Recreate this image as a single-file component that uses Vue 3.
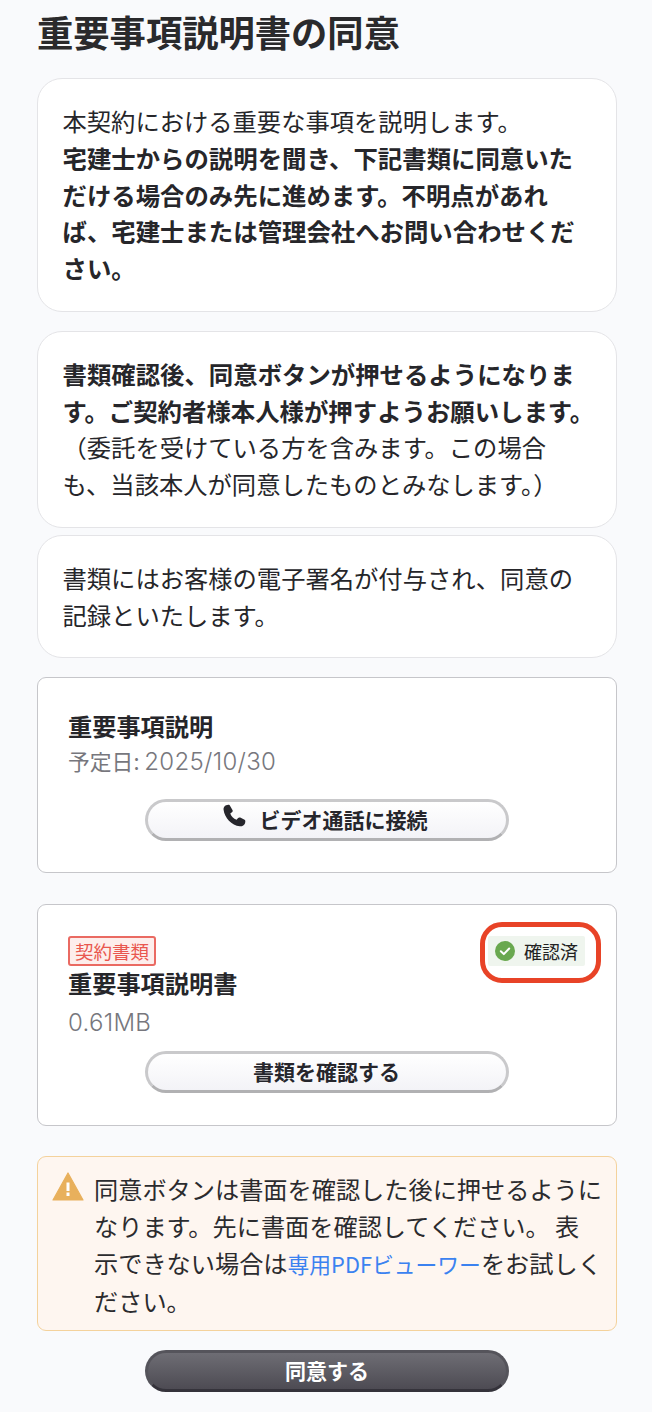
<script setup>
const warnText = "同意ボタンは書面を確認した後に押せるように"
</script>

<template>
  <div class="page">
    <h1 class="title">重要事項説明書の同意</h1>

    <div class="note first">
      本契約における重要な事項を説明します。<br />
      <b>宅建士からの説明を聞き、下記書類に同意いた<br />だける場合のみ先に進めます。不明点があれ<br />ば、宅建士または管理会社へお問い合わせくだ<br />さい。</b>
    </div>

    <div class="note second">
      <b>書類確認後、同意ボタンが押せるようになりま<br />す。ご契約者様本人様が押すようお願いします。</b><br />
      （委託を受けている方を含みます。この場合<br />も、当該本人が同意したものとみなします。）
    </div>

    <div class="note third">
      書類にはお客様の電子署名が付与され、同意の<br />記録といたします。
    </div>

    <section class="doc video">
      <div class="doc-title">重要事項説明</div>
      <div class="doc-sub">予定日: <span class="num">2025/10/30</span></div>
      <button class="btn">
        <svg class="phone" viewBox="0 0 24 24">
          <path d="M1.500 2.500C2.500 1 6 0 7 1.200L10 6.500C10.400 7.300 10 8.300 9 8.900L7.600 9.800C8.500 12.500 11 15.500 14.200 16.400L15.500 14.800C16.200 14 17.200 13.800 18 14.200L22.500 16.500C23.500 17 23.500 18.500 23 20C22.300 22.300 20 23.500 17.500 23.300C9 22.500 1.500 14 .6 6C.4 4.500 .8 3.400 1.500 2.500Z" fill="#26262c" />
        </svg>
        ビデオ通話に接続
      </button>
    </section>

    <section class="doc file">
      <div class="doc-head">
        <div>
          <span class="tag">契約書類</span>
          <div class="doc-title">重要事項説明書</div>
          <div class="doc-sub num">0.61MB</div>
        </div>
        <div class="badge">
          <svg class="check" viewBox="0 0 20 20">
            <circle cx="10" cy="10" r="10" fill="#69a84f" />
            <path d="M5.800 10.300l3 2.800 5.400-5.600" fill="none" stroke="#fff" stroke-width="2" stroke-linecap="round" stroke-linejoin="round" />
          </svg>
          確認済
          <span class="ring"></span>
        </div>
      </div>
      <button class="btn">書類を確認する</button>
    </section>

    <div class="warn">
      <svg class="warn-icon" viewBox="0 0 32 29">
        <path d="M16 1L31 28H1Z" fill="#e8b05c" stroke="#e8b05c" stroke-width="1.200" stroke-linejoin="round" />
        <rect x="14.500" y="10.500" width="3" height="8.500" fill="#fff" />
        <rect x="14.500" y="20.500" width="3" height="3.500" fill="#fff" />
      </svg>
      <p class="warn-text">
        {{ warnText }}<br />なります。先に書面を確認してください。 表<br />示できない場合は<a class="link">専用PDFビューワー</a>をお試しく<br />ださい。
      </p>
    </div>

    <button class="btn dark">同意する</button>
  </div>
</template>

<style scoped>
.page {
  padding: 6px 35px 18px 37px;
  font-family: "Noto Sans CJK JP", sans-serif;
  color: #26262a;
  box-sizing: border-box;
  min-height: 1412px;
}

.title {
  margin: 0 0 22px;
  font-size: 36.3px;
  line-height: 50px;
  font-weight: 700;
  color: #2a2a2c;
}

.note {
  background: #fff;
  border: 1px solid #e4e4e7;
  border-radius: 25px;
  padding: 24px 24.5px;
  font-size: 24.3px;
  line-height: 36.75px;
  white-space: nowrap;
}

.note b {
  font-size: 24.4px;
  font-weight: 700;
}

.first {
  margin-bottom: 19px;
}

.second {
  margin-bottom: 7px;
}

.third {
  margin-bottom: 19px;
}

.doc {
  background: #fff;
  border: 1px solid #c6c6ca;
  border-radius: 9px;
  padding: 30px 31px 31px 30px;
  margin-bottom: 31px;
}

.doc-title {
  font-size: 24.2px;
  line-height: 36px;
  font-weight: 700;
}

.doc-sub {
  font-size: 21.8px;
  line-height: 36px;
  color: #77777d;
}

.video .doc-sub {
  margin-top: -1px;
}

.num {
  font-family: Inter, "Noto Sans CJK JP", sans-serif;
  font-size: 24px;
  font-weight: 300;
  letter-spacing: 0.3px;
}

.btn {
  display: flex;
  align-items: center;
  justify-content: center;
  width: 364px;
  height: 42px;
  margin: 19px auto 0;
  padding: 0 0 2px;
  background: linear-gradient(#fff, #f3f3f7);
  border: 3px solid #c9c9cb;
  border-bottom-color: #b1b1b3;
  border-radius: 21px;
  font-family: inherit;
  font-size: 21px;
  font-weight: 700;
  color: #26262c;
}

.phone {
  width: 23px;
  height: 23px;
  margin: -8px 14px 0 -3px;
}

.file {
  padding-top: 31px;
  padding-bottom: 32px;
  margin-bottom: 30px;
}

.doc-head {
  display: flex;
  justify-content: space-between;
  align-items: flex-start;
}

.tag {
  display: block;
  width: fit-content;
  box-sizing: border-box;
  height: 30px;
  padding: 0 5px;
  background: #fdeeec;
  border: 2px solid #ea6a62;
  border-radius: 3px;
  font-size: 18.5px;
  line-height: 26px;
  color: #e9574f;
}

.file .doc-title {
  margin-top: -1px;
}

.file .doc-sub {
  margin-top: 4px;
}

.file .btn {
  margin-top: 10px;
}

.badge {
  position: relative;
  display: flex;
  align-items: center;
  gap: 9px;
  height: 30px;
  padding: 0 7px;
  background: #eff5ee;
  border-radius: 2px;
  font-size: 18px;
  color: #222;
}

.check {
  width: 20px;
  height: 20px;
}

.ring {
  position: absolute;
  top: -14px;
  right: -16px;
  bottom: -17px;
  left: -8px;
  border: 5px solid #e84327;
  border-radius: 22px;
}

.warn {
  display: flex;
  gap: 10px;
  background: #fef6f0;
  border: 1px solid #f4d29c;
  border-radius: 9px;
  padding: 14px 0 11px 14px;
  margin-bottom: 19px;
}

.warn-icon {
  flex: none;
  width: 32px;
  height: 29px;
  margin-top: 1px;
}

.warn-text {
  margin: 0;
  font-size: 24.2px;
  line-height: 36.75px;
  white-space: nowrap;
  color: #2b2b2e;
}

.link {
  color: #3b82f0;
  font-size: 21.8px;
}

.dark {
  margin-top: 0;
  background: linear-gradient(#6e6d74, #4d4b53);
  border-color: #55545b;
  border-bottom-color: #35333b;
  color: #fff;
}
</style>

<style>
body {
  background: #f9fafc;
}
</style>
